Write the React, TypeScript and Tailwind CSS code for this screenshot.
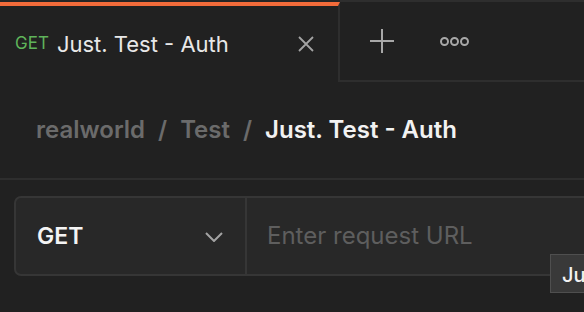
export default function App() {
  return (
    <div className="w-[584px] h-[312px] overflow-hidden bg-[#212121] font-['Inter',sans-serif] relative">
      <div className="flex h-[82px]">
        {/* active tab */}
        <div className="w-[340px] h-full border-t-2 border-[#252525]">
          <div className="flex h-full items-center border-r-2 border-[#2e2e2e] border-t-4 border-t-[#f26b3a] pl-[15px] pr-[24px]">
            <span className="text-[17px] text-[#5fb35a] mr-[8px]">GET</span>
            <span className="text-[22px] text-[#e8e8e8] flex-1">Just. Test - Auth</span>
            <svg width="16" height="16" viewBox="0 0 16 16" className="text-[#a3a3a3]">
              <path d="M1 1 L15 15 M15 1 L1 15" stroke="currentColor" strokeWidth="1.8" fill="none" />
            </svg>
          </div>
        </div>
        <div className="flex flex-1 items-center border-t-2 border-b-2 border-[#2e2e2e] pl-[30px] gap-[46px]">
          <svg width="24" height="24" viewBox="0 0 24 24" className="text-[#a8a8a8]">
            <path d="M12 0 V24 M0 12 H24" stroke="currentColor" strokeWidth="2" fill="none" />
          </svg>
          <div className="flex gap-[1px] mt-[1px]">
            <span className="w-[9px] h-[9px] rounded-full border-2 border-[#a8a8a8]" />
            <span className="w-[9px] h-[9px] rounded-full border-2 border-[#a8a8a8]" />
            <span className="w-[9px] h-[9px] rounded-full border-2 border-[#a8a8a8]" />
          </div>
        </div>
      </div>

      <div className="flex h-[98px] items-center pl-[36px] border-b-2 border-[#2e2e2e] text-[24px] font-semibold">
        <span className="text-[#6b6b6b]">realworld</span>
        <span className="text-[#6b6b6b] mx-[13px]">/</span>
        <span className="text-[#6b6b6b]">Test</span>
        <span className="text-[#6b6b6b] mx-[13px]">/</span>
        <span className="text-[#f2f2f2]">Just. Test - Auth</span>
      </div>

      <div className="pt-[16px] pl-[14px]">
        <div className="flex h-[80px] w-[620px] rounded-[7px] border-2 border-[#363636] bg-[#282828]">
          <div className="flex w-[231px] items-center justify-between border-r-2 border-[#363636] pl-[21px] pr-[22px]">
            <span className="text-[23px] font-semibold text-[#f4f4f4]">GET</span>
            <svg width="18" height="10" viewBox="0 0 18 10" className="text-[#a3a3a3] mt-[1px]">
              <path d="M1 1 L9 9 L17 1" stroke="currentColor" strokeWidth="2" fill="none" />
            </svg>
          </div>
          <div className="flex items-center pl-[20px] text-[24px] text-[#5e5e5e]">Enter request URL</div>
        </div>
      </div>

      <div className="absolute left-[550px] top-[254px] h-[39px] w-[60px] border border-[#4f4f4f] bg-[#393939] pl-[11px] pt-[5px] text-[20px] font-medium text-[#f2f2f2]">
        Just
      </div>
    </div>
  )
}
